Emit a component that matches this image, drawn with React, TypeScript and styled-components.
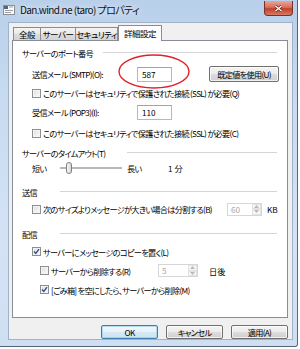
import styled, { createGlobalStyle } from 'styled-components';

const GlobalStyle = createGlobalStyle`
  body {
    margin: 0;
    background: #fff;
    font-family: "Noto Sans CJK JP", "Noto Sans", sans-serif;
    font-feature-settings: "palt";
    color: #000;
  }
`;

const Check = ({ checked }: { checked?: boolean }) => (
  <CheckBox>
    {checked && (
      <svg width="7" height="7" viewBox="0 0 7 7">
        <path d="M1 3.6 L2.8 5.5 L6 1.2" fill="none" stroke="#34508a" strokeWidth="1.4" />
      </svg>
    )}
  </CheckBox>
);

const Spin = ({ value, w }: { value: string; w: number }) => (
  <SpinBox $w={w}>
    <SpinValue>{value}</SpinValue>
    <SpinArrows>
      <SpinArrow>
        <svg width="5" height="3" viewBox="0 0 5 3">
          <path d="M0 3 L2.5 0 L5 3 Z" fill="#b8b8b8" />
        </svg>
      </SpinArrow>
      <SpinArrow>
        <svg width="5" height="3" viewBox="0 0 5 3">
          <path d="M0 0 L2.5 3 L5 0 Z" fill="#b8b8b8" />
        </svg>
      </SpinArrow>
    </SpinArrows>
  </SpinBox>
);

const App = () => {
  return (
    <>
      <GlobalStyle />
      <Window>
        <TitleBar>
          <AppIcon>
            <svg width="12" height="11" viewBox="0 0 12 11">
              <rect x="0.5" y="1.5" width="11" height="9" fill="#fbfbfb" stroke="#8a8f96" />
              <rect x="1" y="2" width="4" height="3" fill="#5b6470" />
              <path d="M6 3 H10 M2 6.5 H10 M2 8.5 H8" stroke="#9aa1a9" />
            </svg>
          </AppIcon>
          <Title>Dan.wind.ne (taro) プロパティ</Title>
          <CloseButton>
            <svg width="9" height="7" viewBox="0 0 9 7">
              <path d="M1.5 1 L7.5 6 M7.5 1 L1.5 6" stroke="#5a1d14" strokeWidth="2.6" />
              <path d="M1.5 1 L7.5 6 M7.5 1 L1.5 6" stroke="#fff" strokeWidth="1.4" />
            </svg>
          </CloseButton>
        </TitleBar>

        <Client>
          <Tabs>
            <Tab $w={28}>全般</Tab>
            <Tab $w={36}>サーバー</Tab>
            <Tab $w={43}>セキュリティ</Tab>
            <Tab $w={44} $active>詳細設定</Tab>
          </Tabs>

          <Panel>
            <Annotation width="74" height="37" viewBox="0 0 74 37">
              <ellipse cx="37" cy="18.5" rx="35" ry="16.5" fill="none" stroke="#e3202a" strokeWidth="1.4" />
            </Annotation>

            <Heading $h={20} $w={81}>
              <span>サーバーのポート番号</span>
              <Rule />
            </Heading>
            <Row $h={22} $indent={19}>
              <FieldLabel $w={105}>送信メール (SMTP)(O):</FieldLabel>
              <TextBox>587</TextBox>
              <PushButton $w={70} $ml={37}>既定値を使用(U)</PushButton>
            </Row>
            <Row $h={16} $indent={19}>
              <Check />
              <span>このサーバーはセキュリティで保護された接続 (SSL) が必要(Q)</span>
            </Row>
            <Row $h={22} $indent={19}>
              <FieldLabel $w={105}>受信メール (POP3)(I):</FieldLabel>
              <TextBox>110</TextBox>
            </Row>
            <Row $h={20} $indent={19}>
              <Check />
              <span>このサーバーはセキュリティで保護された接続 (SSL) が必要(C)</span>
            </Row>

            <Heading $h={20} $w={105}>
              <span>サーバーのタイムアウト(T)</span>
              <Rule />
            </Heading>
            <Row $h={10} $indent={19}>
              <FieldLabel $w={28}>短い</FieldLabel>
              <Slider>
                <Thumb />
              </Slider>
              <FieldLabel $w={41} $ml={5}>長い</FieldLabel>
              <Unit $ml={0}>1 分</Unit>
            </Row>

            <Heading $h={14} $w={38} $mt={12}>
              <span>送信</span>
              <Rule />
            </Heading>
            <Row $h={20} $indent={19}>
              <CheckLabel $w={195}>
                <Check />
                <span>次のサイズよりメッセージが大きい場合は分割する(B)</span>
              </CheckLabel>
              <Spin value="60" w={35} />
              <Unit $ml={5}>KB</Unit>
            </Row>

            <Heading $h={16} $w={38} $mt={7}>
              <span>配信</span>
              <Rule />
            </Heading>
            <Row $h={19} $indent={19}>
              <Check checked />
              <span>サーバーにメッセージのコピーを置く(L)</span>
            </Row>
            <Row $h={19} $indent={27}>
              <CheckLabel $w={118}>
                <Check />
                <span>サーバーから削除する(R)</span>
              </CheckLabel>
              <Spin value="5" w={40} />
              <Unit $ml={11}>日後</Unit>
            </Row>
            <Row $h={19} $indent={27}>
              <Check checked />
              <span>[ごみ箱] を空にしたら、サーバーから削除(M)</span>
            </Row>
          </Panel>

          <ButtonBar>
            <DialogButton $default>OK</DialogButton>
            <DialogButton>キャンセル</DialogButton>
            <DialogButton>適用(A)</DialogButton>
          </ButtonBar>
        </Client>
      </Window>
    </>
  );
};

const Window = styled.div`
  box-sizing: border-box;
  width: 298px;
  height: 347px;
  background: linear-gradient(180deg, #b9d0ea 0%, #c8dbf0 30%, #d4e3f4 70%, #cfdff2 100%);
  border-right: 1px solid rgba(40, 52, 70, 0.7);
  border-bottom: 1px solid rgba(40, 52, 70, 0.7);
  border-bottom-right-radius: 3px;
`;

const TitleBar = styled.div`
  display: flex;
  align-items: flex-start;
  height: 22px;
  padding-left: 3px;
`;

const AppIcon = styled.div`
  display: flex;
  margin-top: 4px;
  width: 12px;
  height: 11px;
`;

const Title = styled.div`
  margin-left: 5px;
  margin-top: 2px;
  font-size: 10px;
  letter-spacing: -0.6px;
  line-height: 16px;
  color: #111;
  white-space: nowrap;
  text-shadow: 0 0 6px rgba(255, 255, 255, 0.9);
`;

const CloseButton = styled.div`
  display: flex;
  align-items: center;
  justify-content: center;
  box-sizing: border-box;
  margin-left: auto;
  margin-top: 1px;
  margin-right: 4px;
  width: 29px;
  height: 15px;
  border: 1px solid #7a3227;
  border-top: none;
  border-radius: 0 0 4px 4px;
  background: linear-gradient(180deg, #e9a697 0%, #d8705c 45%, #c2402a 55%, #d47a65 100%);
`;

const Client = styled.div`
  box-sizing: border-box;
  width: 285px;
  height: 318px;
  margin-left: 8px;
  padding: 2px 5px 0 3px;
  background: #f0f0f0;
  border: 1px solid #9fb2c8;
  font-size: 8.2px;
  letter-spacing: -0.7px;
`;

const Tabs = styled.div`
  display: flex;
  align-items: flex-end;
  height: 15px;
  padding-left: 1px;
`;

const Tab = styled.div<{ $w: number; $active?: boolean }>`
  position: relative;
  box-sizing: border-box;
  display: flex;
  align-items: center;
  justify-content: center;
  width: ${({ $w }) => $w}px;
  height: ${({ $active }) => ($active ? 16 : 13)}px;
  margin-left: ${({ $active }) => ($active ? 0 : -1)}px;
  margin-bottom: ${({ $active }) => ($active ? -1 : 0)}px;
  padding-top: ${({ $active }) => ($active ? 0 : 1)}px;
  border: 1px solid #898c95;
  border-bottom: none;
  background: ${({ $active }) =>
    $active ? '#fff' : 'linear-gradient(180deg, #f4f4f4 0%, #e9e9e9 50%, #dcdcdc 51%, #d4d4d4 100%)'};
  font-size: 8.5px;
  letter-spacing: -0.5px;
  line-height: 1;
  white-space: nowrap;
  z-index: ${({ $active }) => ($active ? 1 : 0)};
  &:first-child {
    margin-left: 0;
  }
`;

const Panel = styled.div`
  position: relative;
  box-sizing: border-box;
  width: 276px;
  height: 278px;
  padding-top: 2px;
  background: #fff;
  border: 1px solid #898c95;
`;

const Annotation = styled.svg`
  position: absolute;
  left: 104px;
  top: 12px;
  pointer-events: none;
`;

const Heading = styled.div<{ $h: number; $w: number; $mt?: number }>`
  display: flex;
  align-items: center;
  height: ${({ $h }) => $h}px;
  margin-top: ${({ $mt }) => $mt ?? 0}px;
  padding: 0 10px 0 9px;
  & > span {
    width: ${({ $w }) => $w}px;
    flex: none;
    white-space: nowrap;
  }
`;

const Rule = styled.div`
  flex: 1;
  height: 1px;
  background: #d5d5d5;
  border-bottom: 1px solid #fff;
`;

const Row = styled.div<{ $h: number; $indent: number }>`
  display: flex;
  align-items: center;
  height: ${({ $h }) => $h}px;
  padding-left: ${({ $indent }) => $indent}px;
  white-space: pre;
`;

const FieldLabel = styled.span<{ $w: number; $ml?: number }>`
  width: ${({ $w }) => $w}px;
  margin-left: ${({ $ml }) => $ml ?? 0}px;
  flex: none;
`;

const CheckLabel = styled.div<{ $w: number }>`
  display: flex;
  align-items: center;
  width: ${({ $w }) => $w}px;
  flex: none;
`;

const CheckBox = styled.span`
  box-sizing: border-box;
  display: flex;
  align-items: center;
  justify-content: center;
  width: 9px;
  height: 9px;
  margin-right: 2px;
  flex: none;
  border: 1px solid #8e8f8f;
  background: linear-gradient(135deg, #dcdcdc 0%, #f0f0f0 60%, #fbfbfb 100%);
  box-shadow: inset 0 0 0 1px #f4f4f4;
`;

const TextBox = styled.div`
  box-sizing: border-box;
  width: 35px;
  height: 15px;
  padding-left: 4px;
  border: 1px solid #b5b9c0;
  border-top-color: #9fa4ab;
  background: #fff;
  line-height: 13px;
  letter-spacing: 0;
`;

const PushButton = styled.div<{ $w: number; $ml: number }>`
  box-sizing: border-box;
  display: flex;
  align-items: center;
  justify-content: center;
  width: ${({ $w }) => $w}px;
  height: 16px;
  margin-left: ${({ $ml }) => $ml}px;
  border: 1px solid #707070;
  border-radius: 2px;
  background: linear-gradient(180deg, #f4f4f4 0%, #ebebeb 50%, #dddddd 51%, #cfcfcf 100%);
  box-shadow: inset 0 0 0 1px rgba(255, 255, 255, 0.7);
`;

const Slider = styled.div`
  position: relative;
  display: flex;
  align-items: center;
  width: 62px;
  height: 2px;
  background: #b9b9b9;
  border-bottom: 1px solid #fff;
`;

const Thumb = styled.div`
  box-sizing: border-box;
  margin-left: 6px;
  width: 6px;
  height: 12px;
  border: 1px solid #808080;
  border-radius: 3px;
  background: linear-gradient(90deg, #f6f6f6 0%, #e6e6e6 60%, #d2d2d2 100%);
`;

const SpinBox = styled.div<{ $w: number }>`
  box-sizing: border-box;
  display: flex;
  width: ${({ $w }) => $w}px;
  height: 13px;
  border: 1px solid #d4d6da;
  background: #fff;
`;

const SpinValue = styled.span`
  flex: 1;
  padding-left: 3px;
  color: #a6a6a6;
  line-height: 11px;
  letter-spacing: 0;
`;

const SpinArrows = styled.div`
  display: flex;
  flex-direction: column;
  width: 9px;
`;

const SpinArrow = styled.div`
  box-sizing: border-box;
  display: flex;
  align-items: center;
  justify-content: center;
  flex: 1;
  border: 1px solid #e2e2e2;
  background: #f7f7f7;
`;

const Unit = styled.span<{ $ml: number }>`
  margin-left: ${({ $ml }) => $ml}px;
  letter-spacing: 0;
  white-space: pre;
`;

const ButtonBar = styled.div`
  display: flex;
  justify-content: flex-end;
  gap: 8px;
  margin-top: 7px;
  margin-right: -1px;
`;

const DialogButton = styled.div<{ $default?: boolean }>`
  box-sizing: border-box;
  display: flex;
  align-items: center;
  justify-content: center;
  width: 57px;
  height: 14px;
  border: 1px solid ${({ $default }) => ($default ? '#3c7fb1' : '#707070')};
  border-radius: 2px;
  background: ${({ $default }) =>
    $default
      ? 'linear-gradient(180deg, #f2f8fc 0%, #e6f1f9 50%, #d6e8f4 51%, #cfe3f2 100%)'
      : 'linear-gradient(180deg, #f4f4f4 0%, #ebebeb 50%, #dddddd 51%, #cfcfcf 100%)'};
  box-shadow: inset 0 0 0 1px ${({ $default }) => ($default ? 'rgba(140,200,240,0.6)' : 'rgba(255,255,255,0.7)')};
`;

export default App;
